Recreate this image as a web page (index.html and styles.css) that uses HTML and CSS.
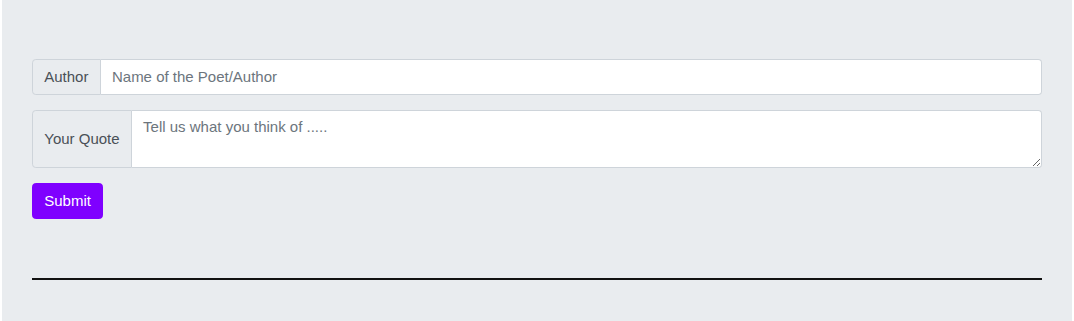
FILE: index.html
```html
<!DOCTYPE html>
<html lang="en">
<head>
    <meta charset="UTF-8">
    <meta name="viewport" content="width=device-width, initial-scale=1.0">
    <title>Quotes</title>
    <link rel="stylesheet" href="styles.css">
</head>
<body>
    <div class="jumbotron">
        <form class="quote-form" onsubmit="return false">
            <div class="input-group">
                <span class="input-group-text">Author</span>
                <input class="form-control" type="text" placeholder="Name of the Poet/Author">
            </div>
            <div class="input-group">
                <span class="input-group-text">Your Quote</span>
                <textarea class="form-control" rows="2" placeholder="Tell us what you think of ....."></textarea>
            </div>
            <button class="btn btn-submit" type="submit">Submit</button>
        </form>
        <hr class="divider">
    </div>
</body>
</html>
```

FILE: styles.css
```css
:root {
    --jumbo-bg: #e9ecef;
    --border-color: #ced4da;
    --text-color: #495057;
    --placeholder-color: #6c757d;
    --accent-color: #7f00ff;
}

html {
    font-size: 15px;
}

body {
    font-family: 'Liberation Sans', Arial, sans-serif;
    font-size: 1rem;
    line-height: 1.5;
    color: #212529;
    margin: 0;
    padding: 0 2px;
    background-color: white;
}

.jumbotron {
    background-color: var(--jumbo-bg);
    padding: 59px 30px 60px;
    border-radius: 0 0 4px 4px;
}

.input-group {
    display: flex;
    align-items: stretch;
    margin-bottom: 1rem;
}

.input-group-text {
    display: flex;
    align-items: center;
    padding: 0.375rem 0.75rem;
    color: var(--text-color);
    background-color: var(--jumbo-bg);
    border: 1px solid var(--border-color);
    border-radius: 0.25rem 0 0 0.25rem;
    white-space: nowrap;
}

.form-control {
    flex: 1 1 auto;
    min-width: 0;
    margin: 0;
    font-family: inherit;
    font-size: 1rem;
    line-height: 1.5;
    color: var(--text-color);
    background-color: white;
    border: 1px solid var(--border-color);
    border-left: none;
    border-radius: 0 0.25rem 0.25rem 0;
    padding: 0.375rem 0.75rem;
    height: calc(1.5em + 0.75rem + 2px);
    box-sizing: border-box;
}

textarea.form-control {
    height: auto;
    resize: vertical;
}

.form-control::placeholder {
    color: var(--placeholder-color);
    opacity: 1;
}

.btn {
    font-family: inherit;
    font-size: 1rem;
    line-height: 1.5;
    padding: 0.375rem 0.75rem;
    border: 1px solid transparent;
    border-radius: 0.25rem;
    cursor: pointer;
}

.btn-submit {
    background-color: var(--accent-color);
    border-color: var(--accent-color);
    color: white;
}

.divider {
    margin: 59px 0 1rem;
    height: 0;
    border: none;
    border-top: 2px solid #111;
}
```
